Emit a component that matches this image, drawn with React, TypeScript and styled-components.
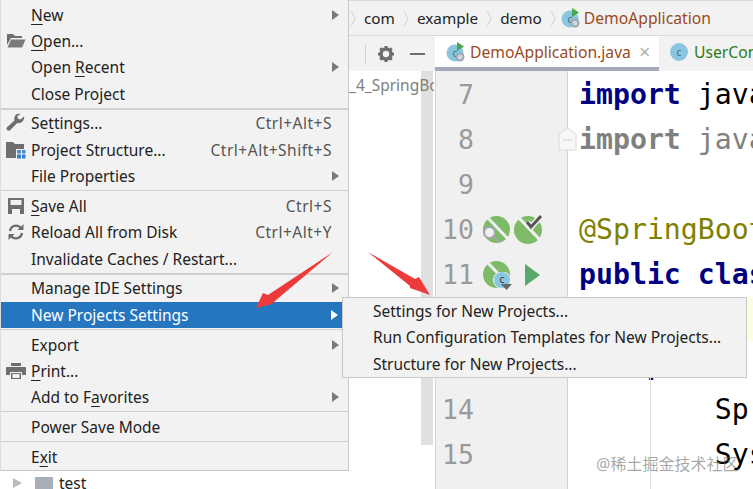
import React from "react";
import styled, { createGlobalStyle } from "styled-components";

const GlobalStyle = createGlobalStyle`
  html, body {
    margin: 0;
    padding: 0;
    background: #fff;
  }
  body {
    font-family: "Noto Sans", "Open Sans", sans-serif;
  }
`;

type MenuEntry = {
  label: React.ReactNode;
  icon?: React.ReactNode;
  shortcut?: string;
  submenu?: boolean;
  active?: boolean;
};

const FolderIcon = () => (
  <svg width="20" height="16" viewBox="0 0 20 16">
    <path d="M1 1h6l2 2h7v2H5L1 12z" fill="#6e6e6e" />
    <path d="M5 6.500h14.500l-3.500 8H1.500z" fill="#7a7a7a" />
  </svg>
);

const WrenchIcon = () => (
  <svg width="20" height="20" viewBox="0 0 20 20">
    <path
      d="M18 3.500l-3.500 3-2.500-.8-.6-2.500L14.500 1C11.800.2 8.600 1.800 8.300 5c-.1.900.1 1.600.3 2.300L1.300 14c-1 1-.9 2.300-.1 3.100.9.900 2.200.9 3.100 0l6.900-7c3.700 1 7.800-2.500 6.800-7.100z"
      fill="#6e6e6e"
    />
  </svg>
);

const StructureIcon = () => (
  <svg width="20" height="18" viewBox="0 0 20 18">
    <path d="M0 1h7l2 2h9v5h-8v9H0z" fill="#6e6e6e" />
    <rect x="11" y="9" width="4" height="3.500" fill="#4a90d0" />
    <rect x="16" y="9" width="3.500" height="3.500" fill="#4a90d0" />
    <rect x="11" y="13.500" width="4" height="4" fill="#2f7fca" />
    <rect x="16" y="13.500" width="3.500" height="4" fill="#2f7fca" />
  </svg>
);

const SaveIcon = () => (
  <svg width="18" height="18" viewBox="0 0 18 18">
    <path d="M1 1h16v16H1z" fill="#6e6e6e" />
    <rect x="3.500" y="3" width="11" height="5" fill="#f2f2f2" />
    <rect x="5" y="12" width="8" height="5" fill="#f2f2f2" />
  </svg>
);

const ReloadIcon = () => (
  <svg width="18" height="18" viewBox="0 0 18 18" fill="none">
    <path d="M3 8a6.200 6.200 0 0 1 11-3" stroke="#6e6e6e" strokeWidth="2.400" />
    <path d="M15 10a6.200 6.200 0 0 1-11 3" stroke="#6e6e6e" strokeWidth="2.400" />
    <path d="M16.500 1v6h-6zM1.500 17v-6h6z" fill="#6e6e6e" />
  </svg>
);

const PrintIcon = () => (
  <svg width="20" height="18" viewBox="0 0 20 18">
    <rect x="5" y="1" width="10" height="3" fill="#6e6e6e" />
    <path d="M1 5h18q1 0 1 1v7h-4v-3H4v3H0V6q0-1 1-1z" fill="#6e6e6e" />
    <path d="M5 11h10v6H5z" fill="#6e6e6e" />
    <rect x="6.500" y="12" width="7" height="4" fill="#f2f2f2" />
  </svg>
);

const groups: MenuEntry[][] = [
  [
    { label: <><u>N</u>ew</>, submenu: true },
    { label: <><u>O</u>pen...</>, icon: <FolderIcon /> },
    { label: <>Open <u>R</u>ecent</>, submenu: true },
    { label: "Close Project" },
  ],
  [
    { label: <>Se<u>t</u>tings...</>, icon: <WrenchIcon />, shortcut: "Ctrl+Alt+S" },
    { label: "Project Structure...", icon: <StructureIcon />, shortcut: "Ctrl+Alt+Shift+S" },
    { label: "File Properties", submenu: true },
  ],
  [
    { label: <><u>S</u>ave All</>, icon: <SaveIcon />, shortcut: "Ctrl+S" },
    { label: "Reload All from Disk", icon: <ReloadIcon />, shortcut: "Ctrl+Alt+Y" },
    { label: "Invalidate Caches / Restart..." },
  ],
  [
    { label: "Manage IDE Settings", submenu: true },
    { label: "New Projects Settings", submenu: true, active: true },
  ],
  [
    { label: "Export", submenu: true },
    { label: <><u>P</u>rint...</>, icon: <PrintIcon /> },
    { label: <>Add to F<u>a</u>vorites</>, submenu: true },
  ],
  [{ label: "Power Save Mode" }],
  [{ label: <>E<u>x</u>it</> }],
];

const subItems = [
  "Settings for New Projects...",
  "Run Configuration Templates for New Projects...",
  "Structure for New Projects...",
];

const crumbs = ["com", "example", "demo"];

const SpringBall = ({ size = 27 }: { size?: number }) => (
  <svg width={size} height={size} viewBox="0 0 27 27">
    <circle cx="13.500" cy="13.500" r="13.500" fill="#7dbb69" />
    <path d="M5 2l20 21" stroke="#f0f0f0" strokeWidth="3" />
  </svg>
);

const ClassRunIcon = ({ size }: { size: number }) => (
  <svg width={size} height={size} viewBox="0 0 20 20">
    <circle cx="9" cy="11" r="8.500" fill="#8ac6e0" />
    <text x="9" y="14.500" fontSize="10" textAnchor="middle" fill="#3d6a80" fontFamily="Noto Sans">
      c
    </text>
    <path d="M11 0l7 4.500-7 4.500z" fill="#4aa84a" />
    <circle cx="14" cy="15" r="4.500" fill="#9aa7ad" />
    <circle cx="14" cy="15" r="2.500" fill="#cfd8dc" />
  </svg>
);

const ClassIcon = () => (
  <svg width="18" height="18" viewBox="0 0 18 18">
    <circle cx="9" cy="9" r="9" fill="#8ac6e0" />
    <text x="9" y="12.500" fontSize="10" textAnchor="middle" fill="#3d6a80" fontFamily="Noto Sans">
      c
    </text>
  </svg>
);

const GearIcon = () => (
  <svg width="18" height="18" viewBox="0 0 18 18">
    <circle cx="9" cy="9" r="5" fill="none" stroke="#6e6e6e" strokeWidth="3.600" />
    <path
      d="M9 1v3M9 14v3M1 9h3M14 9h3M3.300 3.300l2.100 2.100M12.600 12.600l2.100 2.100M14.700 3.300l-2.100 2.100M5.400 12.600l-2.100 2.100"
      stroke="#6e6e6e"
      strokeWidth="3"
    />
  </svg>
);

export default function App() {
  return (
    <Screen>
      <GlobalStyle />
      <Breadcrumbs>
        {crumbs.map((c) => (
          <React.Fragment key={c}>
            <Chevron />
            <Crumb>{c}</Crumb>
          </React.Fragment>
        ))}
        <Chevron $tight />
        <ClassRunIcon size={20} />
        <CurrentCrumb>DemoApplication</CurrentCrumb>
      </Breadcrumbs>

      <Workspace>
        <ProjectPanel>
          <PanelToolbar>
            <ToolDivider />
            <GearIcon />
            <MinusBar />
          </PanelToolbar>
          <PanelBody>
            <Tree>
              <ModuleRow>_4_SpringBoot</ModuleRow>
              <TreeRow>
                <TreeArrow />
                <TreeFolder />
                test
              </TreeRow>
            </Tree>
            <ScrollTrack />
          </PanelBody>
        </ProjectPanel>

        <Editor>
          <TabBar>
            <ActiveTab>
              <ClassRunIcon size={20} />
              <TabTitle>DemoApplication.java</TabTitle>
              <TabClose>×</TabClose>
            </ActiveTab>
            <Tab>
              <ClassIcon />
              <GreenTitle>UserController.java</GreenTitle>
            </Tab>
          </TabBar>
          <EditorBody>
            <Gutter>
              <GutterLine><LineNo>7</LineNo></GutterLine>
              <GutterLine><LineNo>8</LineNo></GutterLine>
              <GutterLine><LineNo>9</LineNo></GutterLine>
              <GutterLine>
                <LineNo>10</LineNo>
                <MarkerSlot>
                  <SpringBall />
                  <SearchBadge viewBox="0 0 18 18" width="18" height="18">
                    <circle cx="7.500" cy="7.500" r="5.500" fill="#f0f0f0" stroke="#a0a5ae" strokeWidth="2" />
                    <path d="M11.500 11.500l5.500 5.500" stroke="#a0a5ae" strokeWidth="2.400" />
                  </SearchBadge>
                </MarkerSlot>
                <MarkerSlot>
                  <SpringBall size={28} />
                  <CheckBadge viewBox="0 0 18 16" width="18" height="16">
                    <path d="M2 8l4 5 10-11" fill="none" stroke="#f0f0f0" strokeWidth="6" />
                    <path d="M2 8l4 5 10-11" fill="none" stroke="#555" strokeWidth="3" />
                  </CheckBadge>
                </MarkerSlot>
              </GutterLine>
              <GutterLine>
                <LineNo>11</LineNo>
                <MarkerSlot>
                  <SpringBall />
                  <ClassBadge viewBox="0 0 20 20" width="20" height="20">
                    <circle cx="9" cy="8" r="8.500" fill="#8ac6e0" stroke="#f0f0f0" />
                    <text x="9" y="11" fontSize="10" textAnchor="middle" fill="#333" fontFamily="Noto Sans">
                      c
                    </text>
                    <path d="M8 12h11l-5.500 6z" fill="#666" />
                  </ClassBadge>
                </MarkerSlot>
                <RunArrow />
              </GutterLine>
              <GutterLine />
              <GutterLine />
              <GutterLine><LineNo>14</LineNo></GutterLine>
              <GutterLine><LineNo>15</LineNo></GutterLine>
            </Gutter>
            <FoldMark viewBox="0 0 19 24" width="19" height="24">
              <path d="M1 7l8.500-6L18 7v16H1z" fill="#f7f7f7" stroke="#d8d8d8" />
              <path d="M5 13h9" stroke="#d0d0d0" />
            </FoldMark>
            <Code>
              <IndentGuide />
              <CodeLine><Keyword>import</Keyword> java.util.List;</CodeLine>
              <CodeLine $muted><Keyword $muted>import</Keyword> java.util.Map;</CodeLine>
              <CodeLine />
              <CodeLine><Annotation>@SpringBootApplication</Annotation></CodeLine>
              <CodeLine><Keyword>public class</Keyword> DemoApplication {"{"}</CodeLine>
              <CodeLine $current />
              <CodeLine>{"    "}<Keyword>public static</Keyword> void main</CodeLine>
              <CodeLine>{"        "}SpringApplication.run();</CodeLine>
              <CodeLine>{"        "}System.out.println();</CodeLine>
            </Code>
          </EditorBody>
        </Editor>
      </Workspace>

      <FileMenu>
        {groups.map((group, i) => (
          <MenuGroup key={i} $last={i === groups.length - 1} $thick={i === 0 || i === 2}>
            {group.map((item, j) => (
              <MenuRow key={j} $active={item.active}>
                <IconSlot>{item.icon}</IconSlot>
                <RowLabel>{item.label}</RowLabel>
                {item.shortcut && <Shortcut>{item.shortcut}</Shortcut>}
                {item.submenu && <SubArrow $active={item.active} />}
              </MenuRow>
            ))}
          </MenuGroup>
        ))}
      </FileMenu>

      <SubMenu>
        {subItems.map((s) => (
          <SubRow key={s}>{s}</SubRow>
        ))}
      </SubMenu>

      <Arrows viewBox="0 0 753 489" width="753" height="489">
        <path d="M333 252L268 295 263 293 256 308 272 304 275 301z" fill="#ee3a3a" />
        <path d="M368 252L415 279 419 277 430 295 410 288 410 286z" fill="#ee3a3a" />
      </Arrows>

      <Watermark>@稀土掘金技术社区</Watermark>
    </Screen>
  );
}

const Screen = styled.div`
  position: relative;
  width: 753px;
  height: 489px;
  overflow: hidden;
  background: #fff;
  display: flex;
  flex-direction: column;
`;

const Breadcrumbs = styled.div`
  height: 36px;
  flex: none;
  box-sizing: border-box;
  background: #f2f2f2;
  border-top: 1px solid #d8d8d8;
  border-bottom: 1px solid #d8d8d8;
  display: flex;
  align-items: center;
  padding-left: 349px;
  font-size: 15.300px;
  color: #222;
`;

const Chevron = styled.span<{ $tight?: boolean }>`
  flex: none;
  margin: 0 ${(p) => (p.$tight ? "4px" : "7px")} 0 -3px;
  width: 10px;
  height: 10px;
  border-top: 1px solid #c4c4c4;
  border-right: 1px solid #c4c4c4;
  transform: scaleX(0.5) rotate(45deg);
`;

const Crumb = styled.span`
  margin-right: 7px;
`;

const CurrentCrumb = styled.span`
  margin-left: 3px;
  font-size: 15.700px;
  color: #9a4a1c;
`;

const Workspace = styled.div`
  flex: 1;
  min-height: 0;
  display: flex;
`;

const ProjectPanel = styled.div`
  width: 435px;
  flex: none;
  display: flex;
  flex-direction: column;
`;

const PanelToolbar = styled.div`
  height: 35px;
  flex: none;
  box-sizing: border-box;
  background: #f2f2f2;
  padding-left: 365px;
  display: flex;
  align-items: center;
`;

const ToolDivider = styled.span`
  width: 1px;
  height: 20px;
  background: #d0d0d0;
  margin-right: 11px;
`;

const MinusBar = styled.span`
  width: 15px;
  height: 2px;
  background: #6e6e6e;
  margin-left: 15px;
`;

const PanelBody = styled.div`
  flex: 1;
  display: flex;
  align-items: flex-start;
  background: #fff;
`;

const Tree = styled.div`
  width: 421px;
  flex: none;
  font-size: 15.500px;
  color: #222;
`;

const ModuleRow = styled.div`
  position: relative;
  z-index: 1;
  padding-left: 349px;
  height: 28px;
  line-height: 28px;
  color: #808080;
  white-space: nowrap;
  overflow: hidden;
  width: 85px;
`;

const TreeRow = styled.div`
  margin-top: 372px;
  height: 24px;
  display: flex;
  align-items: center;
  padding-left: 13px;
`;

const TreeArrow = styled.span`
  width: 0;
  height: 0;
  border-left: 9px solid #b8bcc2;
  border-top: 5px solid transparent;
  border-bottom: 5px solid transparent;
  margin-right: 13px;
`;

const TreeFolder = styled.span`
  width: 18px;
  height: 12px;
  background: #a9afb8;
  margin-right: 6px;
`;

const ScrollTrack = styled.div`
  width: 12px;
  height: 374px;
  flex: none;
  background: #e0e0e0;
`;

const Editor = styled.div`
  flex: 1;
  min-width: 0;
  display: flex;
  flex-direction: column;
`;

const TabBar = styled.div`
  height: 35px;
  flex: none;
  box-sizing: border-box;
  background: #f2f2f2;
  display: flex;
  overflow: hidden;
  font-size: 15.700px;
`;

const Tab = styled.div`
  display: flex;
  align-items: center;
  padding: 0 0 4px 11px;
  white-space: nowrap;
`;

const ActiveTab = styled(Tab)`
  width: 224px;
  flex: none;
  box-sizing: border-box;
  background: #fff;
  border-bottom: 4px solid #a4a9bb;
  padding-bottom: 0;
`;

const TabTitle = styled.span`
  margin-left: 4px;
  color: #9a4a1c;
`;

const TabClose = styled.span`
  margin-left: 8px;
  font-size: 20px;
  color: #b0b0b0;
`;

const GreenTitle = styled.span`
  margin-left: 6px;
  color: #2a7d1e;
`;

const EditorBody = styled.div`
  position: relative;
  flex: 1;
  min-height: 0;
  display: flex;
`;

const Gutter = styled.div`
  width: 133px;
  flex: none;
  box-sizing: border-box;
  padding-top: 1px;
  background: #f0f0f0;
  border-left: 1px solid #d4d4d4;
  border-right: 1px solid #d4d4d4;
`;

const GutterLine = styled.div`
  height: 45px;
  display: flex;
  align-items: center;
  padding-left: 6px;
`;

const LineNo = styled.span`
  width: 32px;
  flex: none;
  text-align: right;
  font-family: "DejaVu Sans Mono", monospace;
  font-size: 26.500px;
  color: #9a9a9a;
`;

const MarkerSlot = styled.span`
  position: relative;
  width: 27px;
  height: 27px;
  flex: none;
  margin-left: 9px;
  & + & {
    margin-left: 4px;
  }
`;

const SearchBadge = styled.svg`
  position: absolute;
  left: -1px;
  top: 9px;
`;

const CheckBadge = styled.svg`
  position: absolute;
  right: -2px;
  top: -2px;
`;

const ClassBadge = styled.svg`
  position: absolute;
  left: 10px;
  top: 11px;
`;

const RunArrow = styled.span`
  width: 0;
  height: 0;
  margin-left: 15px;
  border-left: 15px solid #59a869;
  border-top: 11px solid transparent;
  border-bottom: 11px solid transparent;
`;

const FoldMark = styled.svg`
  position: absolute;
  left: 123px;
  top: 56px;
`;

const Code = styled.div`
  position: relative;
  flex: 1;
  min-width: 0;
  padding-top: 1px;
  overflow: hidden;
  font-family: "DejaVu Sans Mono", monospace;
  font-size: 28.200px;
  color: #000;
`;

const IndentGuide = styled.span`
  position: absolute;
  left: 82px;
  top: 270px;
  bottom: 0;
  width: 1px;
  background: #e0e0e0;
`;

const CodeLine = styled.div<{ $muted?: boolean; $current?: boolean }>`
  height: 45px;
  line-height: 45px;
  padding-left: 11px;
  white-space: pre;
  color: ${(p) => (p.$muted ? "#808080" : "#000")};
  background: ${(p) => (p.$current ? "#fffce4" : "transparent")};
`;

const Keyword = styled.span<{ $muted?: boolean }>`
  font-weight: 700;
  color: ${(p) => (p.$muted ? "#808080" : "#000080")};
`;

const Annotation = styled.span`
  color: #808000;
`;

const FileMenu = styled.div`
  position: absolute;
  left: 0;
  top: 0;
  width: 349px;
  box-sizing: border-box;
  padding-top: 1.500px;
  background: #f2f2f2;
  border-right: 1px solid #c8c8c8;
  border-bottom: 1px solid #c8c8c8;
  border-left: 1px solid #dcdcdc;
  font-size: 15.500px;
  color: #222;
`;

const MenuGroup = styled.div<{ $last?: boolean; $thick?: boolean }>`
  padding-bottom: ${(p) => (p.$last ? 0 : "1px")};
  margin-bottom: ${(p) => (p.$last ? 0 : p.$thick ? "0.600px" : "1.600px")};
  border-bottom: ${(p) =>
    p.$last ? "none" : p.$thick ? "2px solid #d0d0d0" : "1px solid #d0d0d0"};
`;

const MenuRow = styled.div<{ $active?: boolean }>`
  height: 26.300px;
  display: flex;
  align-items: center;
  padding-right: 9px;
  margin-right: ${(p) => (p.$active ? "6px" : 0)};
  background: ${(p) => (p.$active ? "#2675bf" : "transparent")};
  color: ${(p) => (p.$active ? "#fff" : "#222")};
  white-space: nowrap;
  u {
    text-underline-offset: 3px;
  }
`;

const IconSlot = styled.span`
  width: 30px;
  flex: none;
  display: flex;
  justify-content: center;
  svg {
    display: block;
  }
`;

const RowLabel = styled.span`
  flex: 1;
`;

const Shortcut = styled.span`
  color: #555;
  margin-right: 7px;
  letter-spacing: 0.500px;
`;

const SubArrow = styled.span<{ $active?: boolean }>`
  width: 0;
  height: 0;
  margin-right: ${(p) => (p.$active ? "-5px" : "0")};
  border-left: 7px solid ${(p) => (p.$active ? "#fff" : "#7a7a7a")};
  border-top: 5px solid transparent;
  border-bottom: 5px solid transparent;
`;

const SubMenu = styled.div`
  position: absolute;
  left: 342px;
  top: 297px;
  width: 405px;
  height: 81px;
  box-sizing: border-box;
  background: #f2f2f2;
  border: 1px solid #c8c8c8;
  font-size: 15.500px;
  color: #222;
`;

const SubRow = styled.div`
  height: 26.330px;
  line-height: 26px;
  padding-left: 30px;
  white-space: nowrap;
`;

const Arrows = styled.svg`
  position: absolute;
  left: 0;
  top: 0;
  pointer-events: none;
`;

const Watermark = styled.div`
  position: absolute;
  left: 596px;
  top: 454px;
  font-family: "Noto Sans", "Noto Sans CJK SC", sans-serif;
  font-size: 16px;
  line-height: 20px;
  color: rgba(110, 110, 110, 0.6);
  white-space: nowrap;
`;
